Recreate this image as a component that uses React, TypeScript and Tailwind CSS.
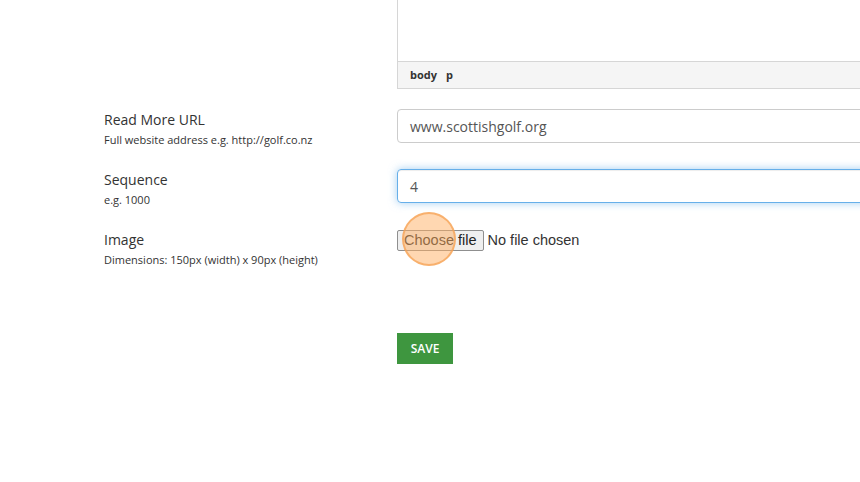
import React from 'react';

const Label = ({ title, hint }: { title: string; hint: string }) => (
  <div className="w-[293px] shrink-0 pt-px">
    <div className="text-[14px] leading-[20px] text-[#333]">{title}</div>
    <div className="mt-[2px] text-[11px] leading-[16px] text-[#333]">{hint}</div>
  </div>
);

export default function App() {
  return (
    <div className="relative h-[482px] w-[860px] overflow-hidden bg-white font-['Open_Sans',sans-serif] text-[#333]">
      <div className="pl-[104px]">
        {/* editor tail */}
        <div className="flex">
          <div className="w-[293px] shrink-0" />
          <div className="w-[600px] shrink-0 border-x border-b border-[#d6d6d6]">
            <div className="h-[61px] bg-white" />
            <div className="flex h-[27px] items-center border-t border-[#d6d6d6] bg-[#f5f5f5] pl-[12px] text-[11px] font-bold text-[#333]">
              <span>body</span>
              <span className="ml-[9px]">p</span>
            </div>
          </div>
        </div>

        <div className="mt-[20px] flex h-[34px] items-start">
          <Label title="Read More URL" hint="Full website address e.g. http://golf.co.nz" />
          <div className="flex h-[34px] w-[600px] shrink-0 items-center rounded-[4px] border border-[#ccc] pl-[12px] text-[14px] text-[#555]">
            www.scottishgolf.org
          </div>
        </div>

        <div className="mt-[26px] flex h-[34px] items-start">
          <Label title="Sequence" hint="e.g. 1000" />
          <div className="flex h-[34px] w-[600px] shrink-0 items-center rounded-[4px] border border-[#66afe9] pl-[12px] text-[14px] text-[#555] shadow-[inset_0_1px_1px_rgba(0,0,0,0.075),0_0_8px_rgba(102,175,233,0.6)]">
            4
          </div>
        </div>

        <div className="mt-[26px] flex h-[34px] items-start">
          <Label title="Image" hint="Dimensions: 150px (width) x 90px (height)" />
          <div className="mt-px flex items-center font-['Liberation_Sans',Arial,sans-serif] text-[14.5px] text-[#222]">
            <div className="flex h-[21px] items-center rounded-[2px] border border-[#8f8f8f] bg-[#efefef] px-[6px]">
              Choose file
            </div>
            <span className="ml-[4px] text-[#333]">No file chosen</span>
          </div>
        </div>

        <div className="mt-[70px] flex">
          <div className="w-[293px] shrink-0" />
          <button className="flex h-[31px] w-[56px] items-center justify-center bg-[#3e963f] text-[12px] font-semibold text-white">
            SAVE
          </button>
        </div>
      </div>

      {/* click highlight */}
      <div className="pointer-events-none absolute left-[402px] top-[212px] h-[54px] w-[54px] rounded-full border-2 border-[rgba(245,160,80,0.7)] bg-[rgba(255,175,100,0.5)]" />
    </div>
  );
}
